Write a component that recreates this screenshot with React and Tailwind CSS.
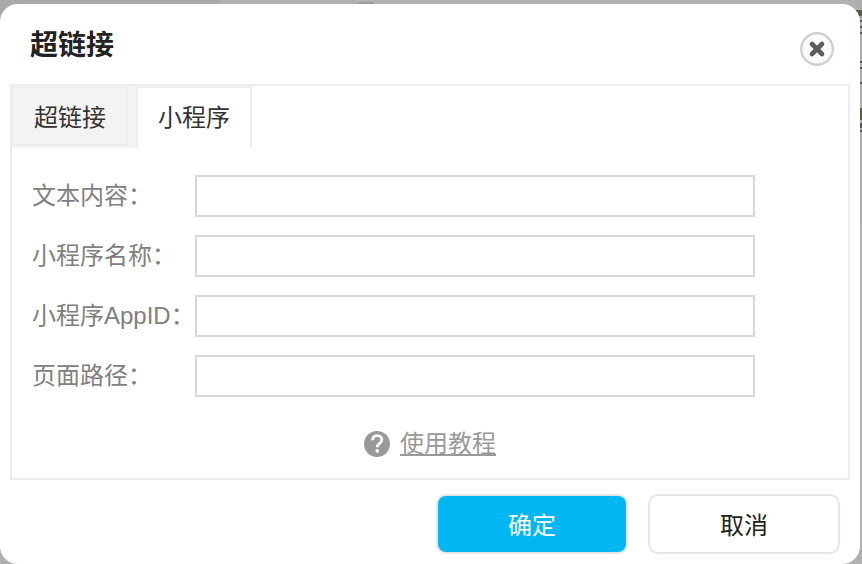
import React, { useState } from "react";

const FIELDS = [
  { id: "text", label: "文本内容：" },
  { id: "name", label: "小程序名称：" },
  { id: "appid", label: "小程序AppID：" },
  { id: "path", label: "页面路径：" },
];

function Backdrop() {
  return (
    <svg className="absolute inset-0 h-full w-full" aria-hidden="true">
      <rect width="218" height="20" fill="#a8aaa9" />
      <path d="M357 4q2-2 6-2h11v3z" fill="#9c9c94" />
      <svg x="100%" overflow="visible">
        <rect x="-5" width="5" height="224" fill="#aeaea6" />
        <path d="M-6 10h6v2h-6zM-4 12h4v4h-4zM-2 20h2v2h-2zM-2 26h2v2h-2zM-2 32h2v2h-2zM-2 61h2v2h-2zM-2 67h2v2h-2zM-2 82h2v2h-2zM-2 108h2v12h-2zM-2 123h2v5h-2zM-2 130h2v2h-2z" fill="#5f5644" />
      </svg>
    </svg>
  );
}

function Tabs({ active, onChange }) {
  return (
    <div className="flex h-[62px]" role="tablist">
      <div className="bg-[#f3f3f3] pr-2">
        <button type="button" role="tab" aria-selected={active === "link"} onClick={() => onChange("link")} className="h-[60px] w-[116px] border-2 border-[#ededed] pt-1 text-2xl text-[#333]">
          超链接
        </button>
      </div>
      <button type="button" role="tab" aria-selected={active === "mini"} onClick={() => onChange("mini")} className="w-[116px] border-x-2 border-t-2 border-[#ededed] bg-white text-2xl text-[#333]">
        小程序
      </button>
    </div>
  );
}

export default function App() {
  const [tab, setTab] = useState("mini");
  return (
    <div className="relative min-h-screen bg-[#b1b1b1] pt-1 pr-0.5 font-['Liberation_Sans','Noto_Sans_CJK_SC',sans-serif]">
      <Backdrop />
      <section role="dialog" aria-labelledby="dialog-title" className="relative rounded-[18px] bg-white px-2.5 pb-2.5">
        <header className="flex h-20 items-center justify-between pr-4 pl-5">
          <h1 id="dialog-title" className="pt-1 text-[28px] leading-10 font-bold text-[#222]">超链接</h1>
          <button type="button" aria-label="关闭" className="mt-2.5">
            <svg width="34" height="34" viewBox="0 0 34 34" fill="none">
              <circle cx="17" cy="17" r="15.8" fill="#fafafa" stroke="#d0d0d0" strokeWidth="2.4" />
              <path d="M12 12l10 10M22 12L12 22" stroke="#5c5c5c" strokeWidth="4.6" strokeLinecap="round" />
            </svg>
          </button>
        </header>
        <main className="border-2 border-[#ededed]">
          <Tabs active={tab} onChange={setTab} />
          <form className="flex flex-col gap-[18px] pt-[27px] pr-[93px] pl-5">
            {FIELDS.map((f) => (
              <div key={f.id} className="flex items-center">
                <label htmlFor={f.id} className="w-[163px] shrink-0 text-2xl leading-9 whitespace-nowrap text-[#808080]">{f.label}</label>
                <input id={f.id} type="text" className="h-[42px] min-w-0 flex-1 border-2 border-[#d7d7d7] bg-white px-2 text-2xl outline-none" />
              </div>
            ))}
          </form>
          <div className="flex items-center justify-center gap-2.5 pt-[29px] pb-4">
            <svg width="26" height="26" viewBox="0 0 26 26" fill="none" aria-hidden="true">
              <circle cx="13" cy="13" r="13" fill="#999" />
              <path d="M8.6 9.2C8.6 6.2 10.6 4.6 13.2 4.6c2.7 0 4.6 1.7 4.6 4.1 0 3.6-4.6 3.7-4.6 7.5" stroke="#fff" strokeWidth="2.8" />
              <circle cx="13.2" cy="19.9" r="1.8" fill="#fff" />
            </svg>
            <a href="#tutorial" className="text-2xl leading-9 text-[#999] underline">使用教程</a>
          </div>
        </main>
        <footer className="flex justify-end gap-5 pt-3.5 pr-2.5 pl-5">
          <button type="button" className="h-[60px] w-48 rounded-[10px] border-2 border-[#e5e6eb] bg-[#00b7f4] pt-1 text-2xl text-white">确定</button>
          <button type="button" className="h-[60px] w-48 rounded-[10px] border-2 border-[#e5e6eb] bg-white pt-1 text-2xl text-[#222]">取消</button>
        </footer>
      </section>
    </div>
  );
}
